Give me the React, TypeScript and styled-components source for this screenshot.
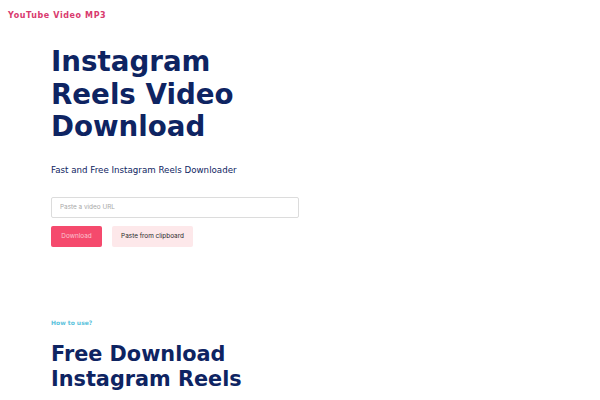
import { FC } from 'react';
import styled, { createGlobalStyle } from 'styled-components';

const GlobalStyle = createGlobalStyle`
  body {
    margin: 0;
    background: #ffffff;
    font-family: "DejaVu Sans", sans-serif;
  }
`

const App: FC = () => {
  return (
    <>
      <GlobalStyle />
      <Header>
        <Brand>YouTube Video MP3</Brand>
      </Header>
      <Hero>
        <Title>Instagram<br />Reels Video<br />Download</Title>
        <Subtitle>Fast and Free Instagram Reels Downloader</Subtitle>
        <UrlInput type="text" placeholder="Paste a video URL" />
        <Actions>
          <DownloadButton type="button">Download</DownloadButton>
          <PasteButton type="button">Paste from clipboard</PasteButton>
        </Actions>
      </Hero>
      <HowTo>
        <Eyebrow>How to use?</Eyebrow>
        <SectionTitle>Free Download<br />Instagram Reels</SectionTitle>
      </HowTo>
    </>
  )
}

const Header = styled.header`
  padding: 11px 8px 0;
`

const Brand = styled.div`
  font-size: 8px;
  line-height: 10px;
  font-weight: 900;
  letter-spacing: 0.6px;
  color: #d93a6e;
`

const Hero = styled.section`
  display: flex;
  flex-direction: column;
  align-items: flex-start;
  padding: 25px 0 0 51px;
`

const Title = styled.h1`
  margin: 0;
  font-size: 27.7px;
  line-height: 32.5px;
  font-weight: bold;
  color: #0e2462;
`

const Subtitle = styled.p`
  margin: 20px 0 0;
  font-size: 8.7px;
  line-height: 12px;
  color: #0e2462;
`

const UrlInput = styled.input`
  box-sizing: border-box;
  margin-top: 21px;
  width: 248px;
  height: 21px;
  padding: 0 8px;
  border: 1px solid #dcdcdc;
  border-radius: 2px;
  font-family: Inter, sans-serif;
  font-size: 6.4px;
  color: #333;
  -webkit-appearance: none;

  &::placeholder {
    color: #a8a8a8;
  }

  &:focus {
    outline: none;
  }
`

const Actions = styled.div`
  display: flex;
  gap: 10px;
  margin-top: 8px;
`

const ActionButton = styled.button`
  height: 21px;
  border: none;
  border-radius: 2px;
  font-family: Inter, sans-serif;
  font-size: 6.4px;
  padding: 0;
  cursor: pointer;
  -webkit-appearance: none;
`

const DownloadButton = styled(ActionButton)`
  width: 51px;
  background: #f54a6d;
  color: #fbc3cf;
`

const PasteButton = styled(ActionButton)`
  width: 81px;
  background: #fde8ea;
  color: #2a2a2a;
`

const HowTo = styled.section`
  padding: 72px 0 0 51px;
`

const Eyebrow = styled.div`
  font-size: 6px;
  line-height: 8px;
  font-weight: bold;
  color: #5cc3dc;
`

const SectionTitle = styled.h2`
  margin: 15px 0 0;
  font-size: 20.8px;
  line-height: 25.2px;
  font-weight: bold;
  color: #0e2462;
`

export default App;
